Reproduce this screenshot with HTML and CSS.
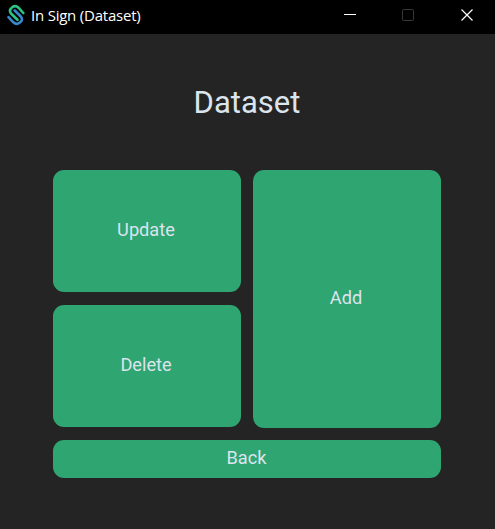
FILE: index.html
```html
<!DOCTYPE html>
<html lang="en">
<head>
<meta charset="utf-8">
<title>In Sign (Dataset)</title>
<link rel="stylesheet" href="styles.css">
</head>
<body>
<header class="titlebar">
  <svg class="logo" width="20" height="22" viewBox="0 0 20 22" fill="none" stroke-linecap="round" stroke-linejoin="round" stroke-width="2.600">
    <path d="M17.300 9 L12.500 3.700 Q9.500 0.900 6.200 3.200 Q2.500 6.200 5 9.500 L11.500 15.800" stroke="#2bc487"/>
    <path d="M2.500 13.200 L7.300 18.300 Q10.500 21.200 13.800 18.600 Q17.500 15.800 14.800 12.500 L8.700 6.500" stroke="#3688cf"/>
  </svg>
  <span class="caption">In Sign (Dataset)</span>
  <svg class="controls" width="174" height="34" viewBox="0 0 174 34" fill="none">
    <path d="M23 14.500h12" stroke="#fff"/>
    <rect x="81.500" y="9.500" width="11" height="11" rx="1" stroke="#383838"/>
    <path d="M140.500 9.500l11 11m0-11l-11 11" stroke="#fff" stroke-width="1.200"/>
  </svg>
</header>
<main class="content">
  <h1 class="heading">Dataset</h1>
  <div class="actions">
    <button class="btn">Update</button>
    <button class="btn add">Add</button>
    <button class="btn">Delete</button>
    <button class="btn back">Back</button>
  </div>
</main>
</body>
</html>
```
FILE: styles.css
```css
body { margin: 0; background: #242424; font-family: Roboto, sans-serif; }
.titlebar { display: flex; height: 34px; background: #000; color: #fff; }
.logo { margin: 4px 5px 0 6px; }
.caption { font: 15px/31px "Open Sans", sans-serif; letter-spacing: -0.22px; }
.controls { margin-left: auto; }
.content { padding: 0 54px 0 53px; }
.heading { margin: 0; padding-top: 49px; height: 87px; font-size: 31px; line-height: 40px; font-weight: 400; text-align: center; color: #dce4ee; }
.actions { display: grid; grid-template: 122px 122px 38px / 188px 188px; gap: 13px 12px; }
.btn { border: 0; border-radius: 11px; padding: 0 2px 4px 0; background: #2fa572; color: #dce4ee; font: 18.2px Roboto, sans-serif; }
.add { grid-row: span 2; margin-bottom: -1px; padding-bottom: 3px; }
.back { grid-column: span 2; padding-right: 1px; }
```
